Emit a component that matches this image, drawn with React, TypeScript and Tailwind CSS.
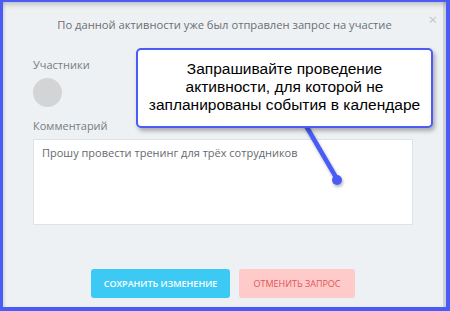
import React from "react";

export default function App() {
  return (
    <div className="w-[450px] h-[311px] bg-[#4a5cf5] pt-[2px] pl-[3px] pr-[4px] pb-[4px]">
      <div
        className="relative w-full h-full bg-[#eef1f4] shadow-[inset_0_6px_5px_-3px_rgba(0,0,0,0.18),inset_-3px_0_0_#cfd2d6,inset_2px_0_2px_rgba(0,0,0,0.08)]"
        style={{ fontFamily: '"Open Sans", "Noto Sans", sans-serif' }}
      >
        <div className="flex flex-col h-full">
          <div className="relative h-[48px] flex items-center justify-center pb-[2px]">
            <span className="text-[11.2px] text-[#6b6f73] leading-none">
              По данной активности уже был отправлен запрос на участие
            </span>
            <span className="absolute right-[9px] top-[10px] text-[15px] leading-none text-[#c2c5c8]">×</span>
          </div>
          <div className="px-[30px] flex flex-col">
            <div className="text-[11px] text-[#777b80] leading-none mt-[9px]">Участники</div>
            <div className="w-[29px] h-[29px] rounded-full bg-[#d3d4d6] mt-[8px]" />
            <div className="text-[11px] text-[#777b80] leading-none mt-[13px]">Комментарий</div>
            <div className="mt-[8px] h-[86px] w-[380px] bg-white border border-[#dfe2e6] px-[8px] pt-[7px] text-[11px] text-[#666a6e] leading-none">
              Прошу провести тренинг для трёх сотрудников
            </div>
          </div>
          <div className="flex justify-center gap-[9px] mt-[44px] pr-[3px]">
            <div className="w-[139px] h-[29px] rounded-[3px] bg-[#3ccaf5] text-white text-[9px] font-semibold flex items-center justify-center">
              СОХРАНИТЬ ИЗМЕНЕНИЕ
            </div>
            <div className="w-[116px] h-[29px] rounded-[3px] bg-[#ffcaca] text-[#e05558] text-[9px] flex items-center justify-center">
              ОТМЕНИТЬ ЗАПРОС
            </div>
          </div>
        </div>

        <svg className="absolute left-0 top-0" width="443" height="305" style={{ overflow: "visible" }}>
          <defs>
            <filter id="sh" x="-50%" y="-50%" width="200%" height="200%">
              <feDropShadow dx="1" dy="2" stdDeviation="1.5" floodColor="#000" floodOpacity="0.3" />
            </filter>
          </defs>
          <g filter="url(#sh)">
            <line x1="302" y1="122" x2="334" y2="177" stroke="#4a5cf5" strokeWidth="4.5" strokeLinecap="round" />
            <circle cx="334" cy="178" r="5" fill="#4a5cf5" />
          </g>
        </svg>

        <div
          className="absolute left-[133px] top-[46px] w-[297px] h-[80px] bg-white border-2 border-[#4a5cf5] rounded-[5px] shadow-[2px_3px_4px_rgba(0,0,0,0.3)] flex flex-col items-center justify-center text-black text-[15.5px] leading-[18px] text-center pb-[3px]"
          style={{ fontFamily: '"Liberation Sans", Arial, sans-serif' }}
        >
          <div>Запрашивайте проведение</div>
          <div>активности, для которой не</div>
          <div>запланированы события в календаре</div>
        </div>
      </div>
    </div>
  );
}
